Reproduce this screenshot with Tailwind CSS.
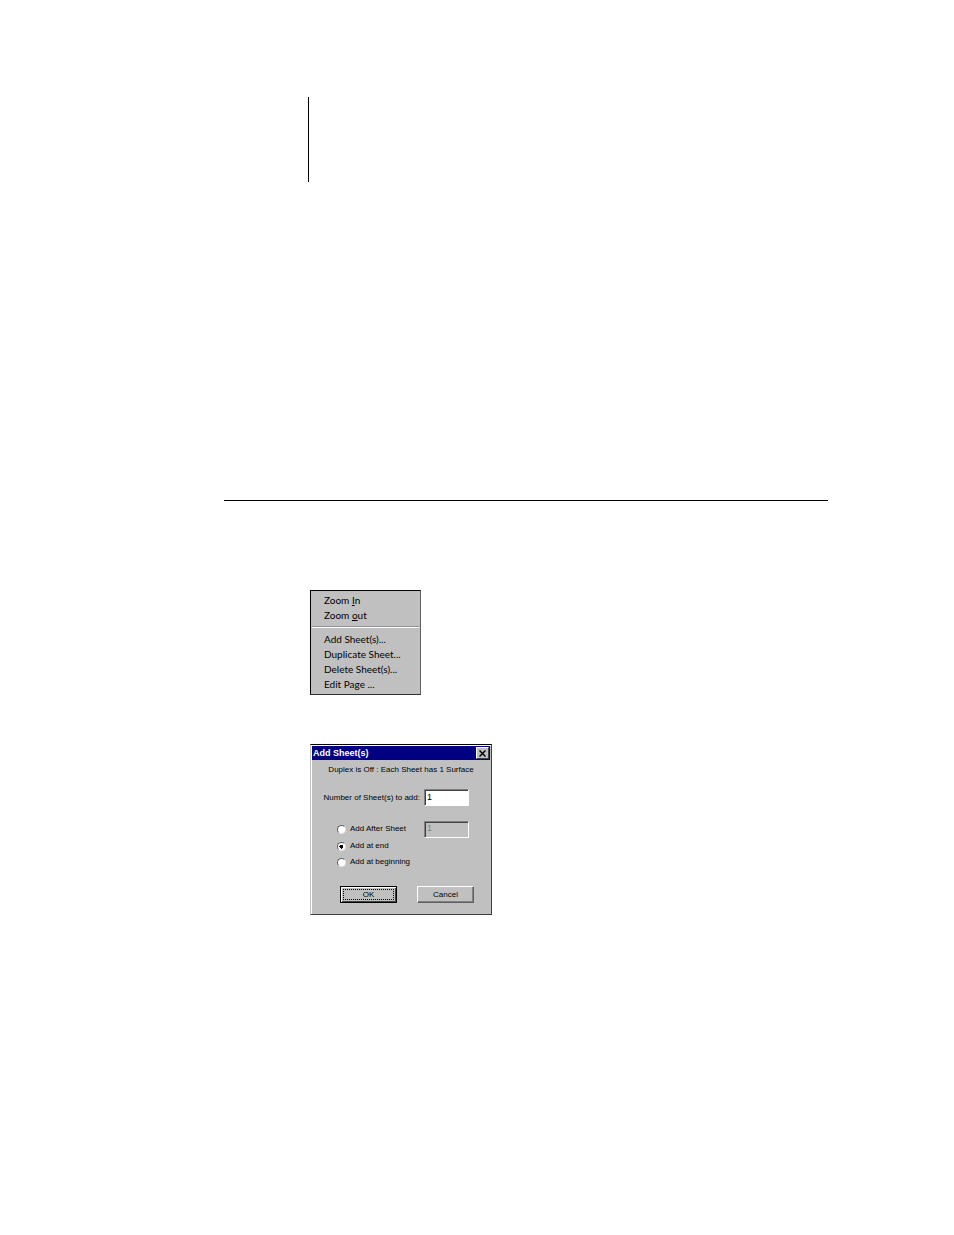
<!DOCTYPE html>
<html lang="en">
<head>
    <meta charset="UTF-8">
    <meta name="viewport" content="width=device-width, initial-scale=1.0">
    <title>Add Sheet(s)</title>
    <script src="https://cdn.jsdelivr.net/npm/@tailwindcss/browser@4"></script>
</head>
<body class="min-h-screen bg-white text-black font-['Liberation_Sans',Arial,sans-serif]">
    <main class="pl-56 pr-[126px] pt-[97px] pb-16">
        <!-- Page header rule -->
        <header class="ml-[84px] h-[85px] border-l border-black"></header>

        <hr class="mt-[318px] border-black">

        <section class="ml-[86px] mt-[89px] flex flex-col items-start">
            <!-- Context menu -->
            <nav class="w-[111px] bg-[#c0c0c0] border border-black border-r-[#606060] border-b-[#303030] py-[2px] font-[Lato,'Liberation_Sans',sans-serif] text-[10px] leading-[15px]">
                <ul>
                    <li><a href="#" class="block pl-[13px]">Zoom <u>I</u>n</a></li>
                    <li><a href="#" class="block pl-[13px]">Zoom <u>o</u>ut</a></li>
                    <li class="mx-px mt-[3px] mb-1 h-[2px] border-t border-t-[#909090] bg-white"></li>
                    <li><a href="#" class="block pl-[13px]">Add Sheet(s)...</a></li>
                    <li><a href="#" class="block pl-[13px]">Duplicate Sheet...</a></li>
                    <li><a href="#" class="block pl-[13px]">Delete Sheet(s)...</a></li>
                    <li><a href="#" class="block pl-[13px]">Edit Page ...</a></li>
                </ul>
            </nav>

            <!-- Add Sheet(s) dialog -->
            <form class="mt-[49px] w-[182px] bg-[#c0c0c0] border border-[#404040] border-t-black border-l-[#c0c0c0] p-px shadow-[inset_1px_1px_0_#fff] text-[8px] leading-3">
                <div class="flex items-center justify-between h-[14px] bg-[#000080] pl-px pr-px">
                    <h1 class="font-bold text-white text-[9px]">Add Sheet(s)</h1>
                    <button type="button" aria-label="Close" class="flex items-center justify-center w-[13px] h-3 bg-[#c0c0c0] border border-white border-r-[#404040] border-b-[#404040]">
                        <svg class="w-[7px] h-[7px]" viewBox="0 0 7 7" fill="none" stroke="#000" stroke-width="1.5"><path d="M.5 .5l6 6M6.5 .5l-6 6"/></svg>
                    </button>
                </div>

                <p class="mt-1 text-center whitespace-nowrap">Duplex is Off : Each Sheet has 1 Surface</p>

                <div class="mt-[13px] pr-[21px] flex items-center justify-end gap-1">
                    <label for="count" class="whitespace-nowrap">Number of Sheet(s) to add:</label>
                    <input id="count" type="text" value="1" class="w-[45px] h-[17px] pl-[2px] pb-[2px] text-[9px] bg-white border border-[#808080] border-r-white border-b-white shadow-[inset_1px_1px_0_#404040]">
                </div>

                <fieldset class="mt-[14px] pl-[25px] pr-[21px]">
                    <div class="flex items-center justify-between h-[18px]">
                        <label class="flex items-center gap-1"><input type="radio" name="where" class="appearance-none w-[9px] h-[9px] rounded-full bg-white border border-[#606060] border-r-[#e0e0e0] border-b-[#e0e0e0] checked:bg-[radial-gradient(#000_2px,#fff_2px)]">Add After Sheet</label>
                        <input type="text" value="1" disabled aria-label="Sheet number" class="w-[45px] h-[17px] pl-[2px] pb-[2px] text-[9px] text-[#808080] bg-[#c0c0c0] border border-[#808080] border-r-white border-b-white shadow-[inset_1px_1px_0_#404040]">
                    </div>
                    <label class="flex items-center gap-1 h-4"><input type="radio" name="where" checked class="appearance-none w-[9px] h-[9px] rounded-full bg-white border border-[#606060] border-r-[#e0e0e0] border-b-[#e0e0e0] checked:bg-[radial-gradient(#000_2px,#fff_2px)]">Add at end</label>
                    <label class="flex items-center gap-1 h-4"><input type="radio" name="where" class="appearance-none w-[9px] h-[9px] rounded-full bg-white border border-[#606060] border-r-[#e0e0e0] border-b-[#e0e0e0] checked:bg-[radial-gradient(#000_2px,#fff_2px)]">Add at beginning</label>
                </fieldset>

                <div class="mt-4 mb-[10px] pl-7 flex gap-5">
                    <button type="submit" class="w-[57px] h-[17px] p-[2px] border border-black shadow-[inset_1px_1px_0_#fff,inset_-1px_-1px_0_#404040]"><span class="flex items-center justify-center h-full border border-dotted border-black">OK</span></button>
                    <button type="button" class="w-[57px] h-[17px] border border-white border-r-[#606060] border-b-[#606060] shadow-[inset_-1px_-1px_0_#808080]">Cancel</button>
                </div>
            </form>
        </section>
    </main>
</body>
</html>
